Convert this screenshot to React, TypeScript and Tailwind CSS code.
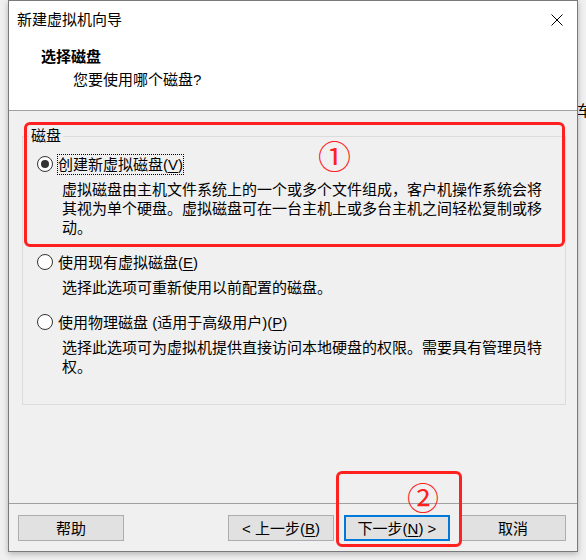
import React from "react";

const Radio = ({ checked }: { checked?: boolean }) => (
    <span className="flex h-[16px] w-[16px] shrink-0 items-center justify-center rounded-full border-[1.5px] border-[#333333] bg-white">
        {checked && <span className="h-[8px] w-[8px] rounded-full bg-[#333333]" />}
    </span>
)

type OptionProps = {
    label: string
    hotkey: string
    desc: string
    checked?: boolean
    focused?: boolean
}

const Option = ({ label, hotkey, desc, checked, focused }: OptionProps) => (
    <div className="flex flex-col">
        <div className="flex h-[20px] items-center pl-[14px]">
            <Radio checked={checked} />
            <span className={`ml-[4px] border leading-[19px] ${focused ? "border-dotted border-black" : "border-transparent"}`}>
                {label}(<span className="underline underline-offset-2">{hotkey}</span>)
            </span>
        </div>
        <p className="ml-[39px] mt-[6px] w-[488px] leading-[19px]">{desc}</p>
    </div>
)

const Btn = ({ children, primary }: { children: React.ReactNode, primary?: boolean }) => (
    <div className={`flex h-[26px] w-[106px] items-center justify-center bg-[#e1e1e1] leading-none ${primary ? "border-2 border-[#0078d7]" : "border border-[#adadad]"}`}>
        {children}
    </div>
)

const App = () => {
    return (
        <div className="relative flex h-[560px] w-[586px] overflow-hidden bg-[#f0f0f0] font-['Liberation_Sans','Noto_Sans_CJK_SC',sans-serif] text-[15px] text-black">
            <div className="w-[8px] shrink-0" />

            {/* wizard window */}
            <div className="flex h-[552px] w-[570px] shrink-0 flex-col border border-[#7a7a7a] bg-[#f0f0f0] shadow-[0_2px_6px_rgba(0,0,0,0.25)]">
                <div className="flex h-[110px] flex-col border-b border-[#a0a0a0] bg-white">
                    <div className="flex h-[37px] items-center justify-between pl-[8px] pr-[14px]">
                        <span className="leading-[20px]">新建虚拟机向导</span>
                        <svg width="12" height="12" viewBox="0 0 12 12">
                            <path d="M0.5 0.5 L11.5 11.5 M11.5 0.5 L0.5 11.5" stroke="#000" strokeWidth="1" />
                        </svg>
                    </div>
                    <span className="ml-[32px] mt-[9px] font-bold leading-[20px]">选择磁盘</span>
                    <span className="ml-[64px] mt-[3px] leading-[20px]">您要使用哪个磁盘?</span>
                </div>

                <div className="flex-1 border-b border-[#a0a0a0]">
                    <fieldset className="ml-[13px] mr-[11px] mt-[15px] flex flex-col border border-[#dcdcdc] pb-[28px] pt-[8px]">
                        <legend className="ml-[6px] px-[2px] leading-[20px]">磁盘</legend>
                        <div className="flex flex-col gap-[15px]">
                            <Option
                                checked
                                focused
                                label="创建新虚拟磁盘"
                                hotkey="V"
                                desc="虚拟磁盘由主机文件系统上的一个或多个文件组成，客户机操作系统会将其视为单个硬盘。虚拟磁盘可在一台主机上或多台主机之间轻松复制或移动。"
                            />
                            <Option
                                label="使用现有虚拟磁盘"
                                hotkey="E"
                                desc="选择此选项可重新使用以前配置的磁盘。"
                            />
                            <Option
                                label="使用物理磁盘 (适用于高级用户)"
                                hotkey="P"
                                desc="选择此选项可为虚拟机提供直接访问本地硬盘的权限。需要具有管理员特权。"
                            />
                        </div>
                    </fieldset>
                </div>

                <div className="flex h-[47px] shrink-0 pl-[9px] pr-[11px] pt-[11px]">
                    <Btn>帮助</Btn>
                    <div className="ml-auto flex gap-[10px]">
                        <Btn>&lt; 上一步(<span className="underline underline-offset-2">B</span>)</Btn>
                        <Btn primary>下一步(<span className="underline underline-offset-2">N</span>) &gt;</Btn>
                        <Btn>取消</Btn>
                    </div>
                </div>
            </div>

            {/* background window peeking out on the right */}
            <div className="w-[8px] shrink-0 overflow-hidden pt-[101px]">
                <span className="-ml-[1px] block whitespace-nowrap leading-[20px]">车</span>
            </div>

            {/* red annotations drawn over the screenshot */}
            <div className="absolute left-[24px] top-[122px] h-[125px] w-[541px] rounded-[6px] border-[3px] border-[#ff2020]">
                <span className="absolute left-[291px] top-[16px] text-[33px] leading-none text-[#ff2020]">①</span>
            </div>
            <div className="absolute left-[336px] top-[471px] h-[76px] w-[126px] rounded-[6px] border-[3px] border-[#ff2020]">
                <span className="absolute left-[68px] top-[9px] text-[32px] leading-none text-[#ff2020]">②</span>
            </div>
        </div>
    )
}

export default App
